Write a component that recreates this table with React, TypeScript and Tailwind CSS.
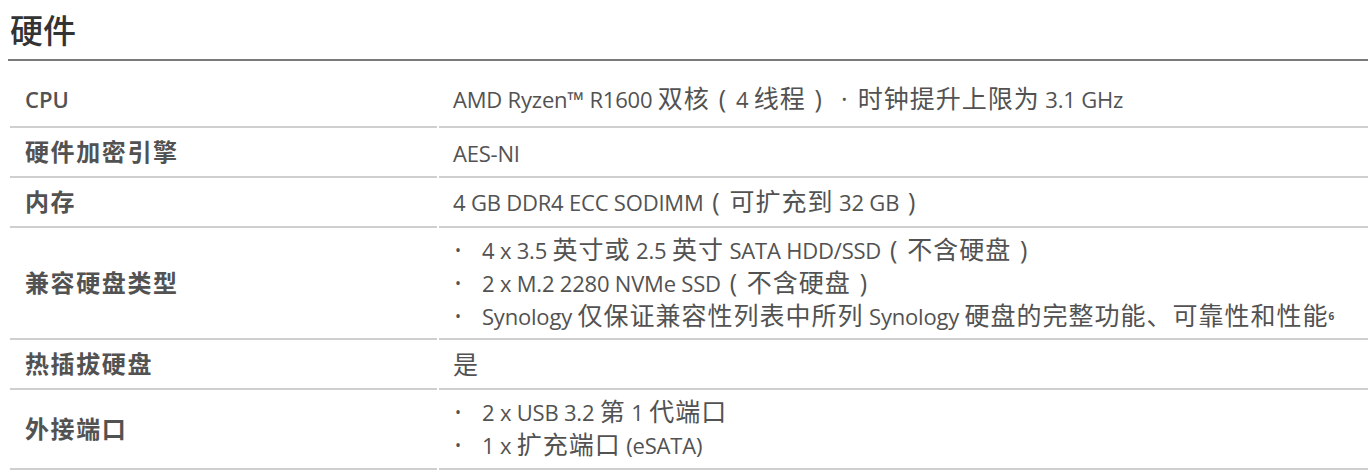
import type { ReactNode } from 'react'

// CJK runs a little larger than the Latin ones, full-width brackets centred
function Mix({ s }: { s: string }) {
  const parts = s.split(/([\u3000-\u303f\u4e00-\u9fff\uff00-\uffef]+)/)
  return (
    <>
      {parts.map((p, i) => {
        if (!/[\u3000-\u303f\u4e00-\u9fff\uff00-\uffef]/.test(p)) return p
        return (
          <span key={i} className="text-[25px] tracking-[1px]">
            {p.split(/([（），])/).map((q, j) => {
              if (q === '（') return <span key={j} className="inline-block w-[26px] text-center">(</span>
              if (q === '）') return <span key={j} className="inline-block w-[26px] text-center">)</span>
              if (q === '，') return <span key={j} className="inline-block w-[26px] text-center">·</span>
              return q
            })}
          </span>
        )
      })}
    </>
  )
}

type Row = {
  label: string
  lines: ReactNode[]
  bullets?: boolean
  h: string
  pt: string
}

const rows: Row[] = [
  { label: 'CPU', lines: [<Mix s="AMD Ryzen™ R1600 双核（4 线程），时钟提升上限为 3.1 GHz" />], h: 'h-[67px]', pt: 'pt-[22px]' },
  { label: '硬件加密引擎', lines: ['AES-NI'], h: 'h-[50px]', pt: 'pt-[9px]' },
  { label: '内存', lines: [<Mix s="4 GB DDR4 ECC SODIMM（可扩充到 32 GB）" />], h: 'h-[50px]', pt: 'pt-[8px]' },
  {
    label: '兼容硬盘类型',
    bullets: true,
    lines: [
      <Mix s="4 x 3.5 英寸或 2.5 英寸 SATA HDD/SSD（不含硬盘）" />,
      <Mix s="2 x M.2 2280 NVMe SSD（不含硬盘）" />,
      <>
        <Mix s="Synology 仅保证兼容性列表中所列 Synology 硬盘的完整功能、可靠性和性能" />
        <sup className="text-[10px] font-bold">6</sup>
      </>,
    ],
    h: 'h-[112px]',
    pt: 'pt-[5px]',
  },
  { label: '热插拔硬盘', lines: [<Mix s="是" />], h: 'h-[50px]', pt: 'pt-[9px]' },
  {
    label: '外接端口',
    bullets: true,
    lines: [<Mix s="2 x USB 3.2 第 1 代端口" />, <Mix s="1 x 扩充端口 (eSATA)" />],
    h: 'h-[80px]',
    pt: 'pt-[5px]',
  },
]

export default function App() {
  return (
    <div className="bg-white w-[1368px] h-[472px] overflow-hidden pl-2 text-[#525252] font-['Open_Sans','Noto_Sans_CJK_SC',sans-serif]">
      <h2 className="pl-[2px] pt-[13px] pb-[10px] text-[33px] leading-[36px] font-medium text-[#333] border-b-2 border-[#7a7a7a]">
        硬件
      </h2>
      <div className="ml-[2px]">
        {rows.map((r) => (
          <div key={r.label} className={`flex gap-[2px] ${r.h}`}>
            <div
              className={`w-[427px] shrink-0 border-b-2 border-[#cfcfcf] pl-[15px] flex items-center font-semibold ${
                r.label === 'CPU' ? 'text-[22px] font-bold ' + r.pt + ' items-start leading-[32px]' : 'text-[24px] tracking-[1.6px]'
              }`}
            >
              {r.label}
            </div>
            <div className={`flex-1 border-b-2 border-[#cfcfcf] pl-[14px] ${r.pt} text-[22px] tracking-[-0.2px]`}>
              {r.lines.map((l, i) => (
                <div key={i} className={`flex items-center ${r.bullets ? 'h-[33px]' : 'h-[32px]'}`}>
                  {r.bullets && <span className="w-[29px] pl-[2px] shrink-0 text-[16px]">•</span>}
                  <span className="whitespace-nowrap">{l}</span>
                </div>
              ))}
            </div>
          </div>
        ))}
      </div>
    </div>
  )
}
